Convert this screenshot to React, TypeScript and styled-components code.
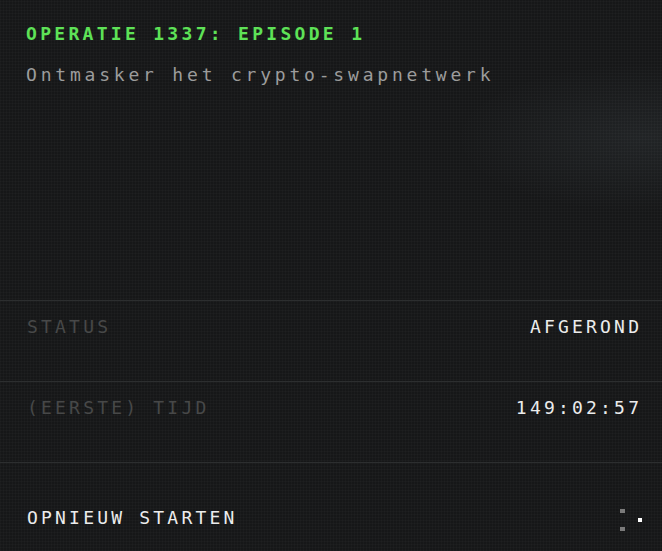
import styled, { createGlobalStyle } from "styled-components";

const GlobalStyle = createGlobalStyle`
  html, body {
    margin: 0;
    padding: 0;
    background: #161718;
  }
  * {
    box-sizing: border-box;
  }
`;

const Screen = styled.div`
  position: relative;
  width: 662px;
  height: 551px;
  overflow: hidden;
  font-family: "DejaVu Sans Mono", "Liberation Mono", monospace;
  background-color: #161718;
  background-image:
    radial-gradient(ellipse 190px 75px at 645px 138px, rgba(190, 215, 230, 0.065), rgba(190, 215, 230, 0) 100%),
    repeating-linear-gradient(0deg, rgba(255, 255, 255, 0.018) 0 1px, transparent 1px 3px),
    repeating-linear-gradient(90deg, rgba(255, 255, 255, 0.018) 0 1px, transparent 1px 3px);
  display: flex;
  flex-direction: column;
`;

const Intro = styled.header`
  height: 301px;
  padding: 24px 26px 0;
  border-bottom: 1px solid #2c2e2f;
`;

const Title = styled.h1`
  margin: 0;
  font-size: 18px;
  line-height: 20px;
  font-weight: bold;
  letter-spacing: 3.3px;
  color: #5ee257;
`;

const Subtitle = styled.p`
  margin: 21px 0 0;
  font-size: 18px;
  line-height: 20px;
  letter-spacing: 3.8px;
  color: #9c9c9c;
`;

const Row = styled.div`
  height: 81px;
  padding: 16px 23px 0 27px;
  display: flex;
  justify-content: space-between;
  align-items: flex-start;
  border-bottom: 1px solid #2c2e2f;
`;

const Label = styled.span`
  font-size: 18px;
  line-height: 20px;
  letter-spacing: 3.2px;
  color: #474848;
`;

const Value = styled.span`
  font-size: 18px;
  line-height: 20px;
  letter-spacing: 3.2px;
  margin-right: -3.2px;
  color: #ececec;
`;

const Footer = styled.div`
  flex: 1;
  padding: 45px 22px 0 27px;
  display: flex;
  justify-content: space-between;
  align-items: flex-start;
`;

const RestartButton = styled.button`
  padding: 0;
  border: none;
  background: none;
  font-family: inherit;
  font-size: 18px;
  line-height: 20px;
  letter-spacing: 3.2px;
  color: #ececec;
  cursor: pointer;
`;

const Dots = styled.svg`
  margin-top: -1px;
  margin-right: -2px;
`;

export default function App() {
  return (
    <>
      <GlobalStyle />
      <Screen>
        <Intro>
          <Title>OPERATIE 1337: EPISODE 1</Title>
          <Subtitle>Ontmasker het crypto-swapnetwerk</Subtitle>
        </Intro>
        <Row>
          <Label>STATUS</Label>
          <Value>AFGEROND</Value>
        </Row>
        <Row>
          <Label>(EERSTE) TIJD</Label>
          <Value>149:02:57</Value>
        </Row>
        <Footer>
          <RestartButton>OPNIEUW STARTEN</RestartButton>
          <Dots width="24" height="24" viewBox="0 0 24 24">
            <rect x="2" y="2" width="5" height="4" fill="#7a7a7a" />
            <rect x="20" y="11" width="4" height="4" fill="#ffffff" />
            <rect x="2" y="20" width="5" height="4" fill="#7a7a7a" />
          </Dots>
        </Footer>
      </Screen>
    </>
  );
}
